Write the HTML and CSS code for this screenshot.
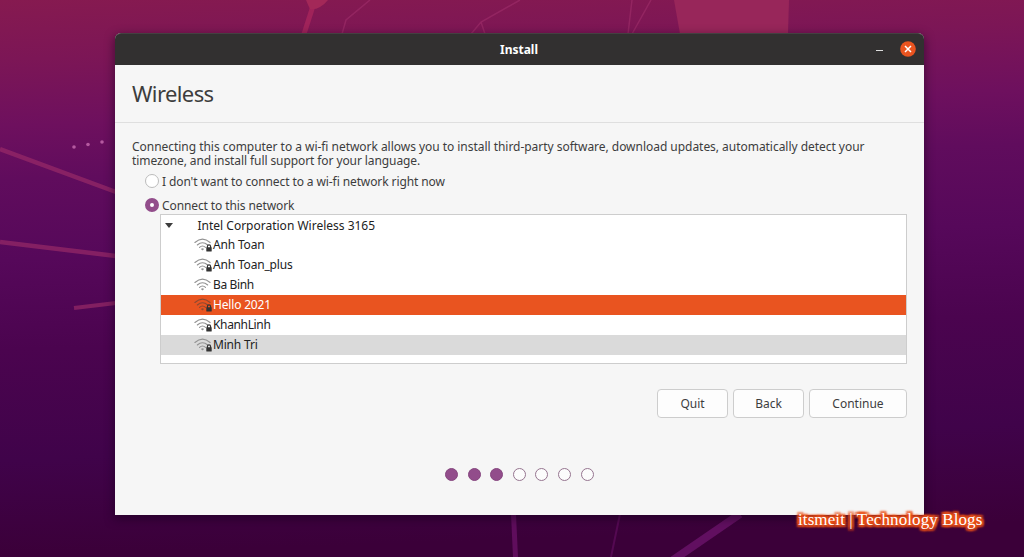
FILE: index.html
```
<!DOCTYPE html>
<html lang="en">
<head>
<meta charset="utf-8">
<title>Install</title>
<link rel="stylesheet" href="styles.css">
</head>
<body>
<svg class="wallpaper" viewBox="0 0 1024 557" aria-hidden="true">
  <g fill="none" stroke="#9c2c68" stroke-opacity=".65">
    <path stroke-width="4.500" d="M0 149 L116 192"/>
    <path stroke-width="4.500" d="M0 242 L116 256"/>
    <path stroke-width="4" d="M74 308 L116 303"/>
    <path stroke-width="5" d="M313 6 L304 34" stroke="#b02a5e"/>
    <path stroke-width="1.500" d="M632 0 L628 34 M651 0 L632 34 M370 0 L346 20 L342 34 M520 0 L481 22 L471 34 M481 22 L485 34"/>
  </g>
  <g fill="none" stroke="#5f0d5c">
    <path stroke-width="8" stroke="#610f60" d="M673 560 L740 514"/>
    <path stroke-width="5" d="M513.500 514 L515.500 557"/>
    <path stroke-width="2" stroke-opacity=".7" d="M620 514 L611 557"/>
  </g>
  <path fill="#a32858" d="M306 0h22q-3 4-8 7t-10 2q-2-4-4-9z"/>
  <path fill="#98265a" d="M674 0h115l-1 34H680z"/>
  <g fill="#b55aa0"><circle cx="74" cy="147" r="1.8"/><circle cx="88" cy="144.500" r="1.8"/><circle cx="102" cy="142" r="1.8"/></g>
</svg>
<svg class="defs" aria-hidden="true">
  <symbol id="wifi" viewBox="0 0 20 16">
    <g fill="none" stroke="currentColor" stroke-width="1.1" stroke-linecap="round">
      <path d="M.9 5.500Q8.500-1.200 16.100 5.500"/>
      <path d="M3.300 8Q8.500 3.400 13.700 8"/>
      <path d="M5.500 10.300Q8.500 7.600 11.500 10.300"/>
    </g>
    <path fill="currentColor" d="M6.900 11.900Q8.500 10.800 10.100 11.900L8.500 13.500z"/>
  </symbol>
  <symbol id="lock" viewBox="0 0 6 8">
    <path fill="none" stroke="#333" stroke-width="1.200" d="M1.400 4V2.500a1.600 1.600 0 0 1 3.200 0V4"/>
    <rect x=".3" y="3.200" width="5.400" height="4.300" rx=".5" fill="#333"/>
  </symbol>
</svg>
<main class="window">
  <header class="titlebar">
    <span class="title">Install</span>
    <span class="minimize"></span>
    <svg class="close" viewBox="0 0 16 16"><circle cx="8" cy="8" r="7.800" fill="#e95420"/><path d="M5 5l6 6M11 5l-6 6" stroke="#fff" stroke-width="1.500"/></svg>
  </header>
  <h1 class="heading"><span>Wireless</span></h1>
  <section class="content">
    <p class="intro"><span class="line1">Connecting this computer to a wi-fi network allows you to install third-party software, download updates, automatically detect your</span><span class="line2">timezone, and install full support for your language.</span></p>
    <div class="option"><i class="radio"></i><span>I don't want to connect to a wi-fi network right now</span></div>
    <div class="option second"><i class="radio on"></i><span>Connect to this network</span></div>
    <div class="list">
      <div class="row device"><i class="arrow"></i><span>Intel Corporation Wireless 3165</span></div>
      <div class="row"><span class="signal"><svg class="wifi"><use href="#wifi"/></svg><svg class="lock"><use href="#lock"/></svg></span><span class="name">Anh Toan</span></div>
      <div class="row"><span class="signal"><svg class="wifi"><use href="#wifi"/></svg><svg class="lock"><use href="#lock"/></svg></span><span class="name">Anh Toan_plus</span></div>
      <div class="row"><span class="signal"><svg class="wifi"><use href="#wifi"/></svg></span><span class="name tight">Ba Binh</span></div>
      <div class="row selected"><span class="signal"><svg class="wifi"><use href="#wifi"/></svg><svg class="lock"><use href="#lock"/></svg></span><span class="name">Hello 2021</span></div>
      <div class="row"><span class="signal"><svg class="wifi"><use href="#wifi"/></svg><svg class="lock"><use href="#lock"/></svg></span><span class="name tight">KhanhLinh</span></div>
      <div class="row hovered"><span class="signal"><svg class="wifi"><use href="#wifi"/></svg><svg class="lock"><use href="#lock"/></svg></span><span class="name">Minh Tri</span></div>
    </div>
    <div class="buttons"><button>Quit</button><button>Back</button><button class="wide">Continue</button></div>
    <div class="steps"><i class="done"></i><i class="done"></i><i class="done"></i><i></i><i></i><i></i><i></i></div>
  </section>
</main>
<div class="watermark">itsmeit | Technology Blogs</div>
</body>
</html>
```
FILE: styles.css
```
* { box-sizing: border-box; }
body {
  margin: 0;
  height: 557px;
  overflow: hidden;
  position: relative;
  padding: 33px 0 0 115px;
  font-family: "Noto Sans", "Open Sans", sans-serif;
  font-size: 12px;
  color: #3d3d3d;
  background: linear-gradient(178deg, #861a50 0, #7c1656 60px, #6e105e 125px, #600c5d 180px, #56085a 260px, #4b044f 350px, #40034a 460px, #3b0039 557px);
}
.wallpaper { position: absolute; left: 0; top: 0; width: 1024px; height: 557px; }
.defs { position: absolute; width: 0; height: 0; }
.window {
  position: relative;
  width: 808.5px;
  height: 482px;
  background: #f6f6f6;
  border-radius: 6px 6px 0 0;
  box-shadow: 0 3px 10px 1px rgba(20, 0, 25, .5);
  white-space: nowrap;
}
.titlebar {
  display: flex;
  align-items: center;
  height: 32px;
  padding: 0 7.5px 2px 0;
  background: #323030;
  border-radius: 6px 6px 0 0;
  border-top: 1px solid #444041;
}
.title { flex: 1; padding: 1px 0 0 47px; text-align: center; color: #fff; font-weight: 700; font-size: 12px; }
.minimize { width: 7px; height: 1px; margin: 4px 17px 0 0; background: #ddd; }
.close { width: 16px; height: 16px; }
.heading {
  display: flex;
  align-items: center;
  height: 58px;
  margin: 0;
  padding: 0 0 1px 17px;
  border-bottom: 1px solid #dfdfdf;
  font-size: 22px;
  font-weight: 400;
  letter-spacing: -.6px;
}
.content { padding: 17px 16.5px 0 17px; }
.intro { margin: 0; line-height: 14px; }
.line1, .line2 { display: block; }
.line1 { letter-spacing: -.035px; }
.line2 { letter-spacing: -.09px; }
.option { display: flex; align-items: center; gap: 3px; height: 20px; margin: 3px 0 0 13px; letter-spacing: -.1px; }
.option.second { margin-top: 4px; }
.radio { width: 14px; height: 14px; border: 1px solid #bcbcbc; border-radius: 50%; background: #fff; }
.radio.on { border: 5px solid #924d8b; }
.list { height: 150px; margin: -1px 0 0 28px; border: 1px solid #cdcdcd; background: #fff; color: #222; }
.row { display: flex; align-items: center; height: 20px; padding-left: 33px; }
.name { padding-bottom: 1px; letter-spacing: -.18px; }
.name.tight { letter-spacing: -.35px; }
.device { padding-left: 4px; gap: 24.5px; }
.arrow { border: 4px solid transparent; border-top: 5px solid #3d3d3d; border-bottom: 0; }
.signal { position: relative; width: 19px; height: 16px; color: #929292; }
.wifi { display: block; width: 20px; height: 16px; }
.lock { position: absolute; left: 12px; top: 7px; width: 6px; height: 8px; }
.selected { background: #e95420; color: #fff; }
.selected .signal { color: #8b4a32; }
.hovered { background: #dadada; }
.buttons { display: flex; justify-content: flex-end; gap: 5px; margin-top: 25px; }
button { width: 71px; height: 29px; padding: 0; border: 1px solid #cdcdcd; border-radius: 4px; background: #fdfdfd; color: #3d3d3d; font: inherit; }
button.wide { width: 98px; }
.steps { display: flex; gap: 9.6px; margin: 50px 0 0 313px; }
.steps i { width: 13px; height: 13px; border: 1px solid #967590; border-radius: 50%; background: #fcfcfc; }
.steps .done { border-color: #86467f; background: #924d8b; }
.watermark {
  position: absolute;
  left: 798px;
  top: 510px;
  font: 17px/20px "Liberation Serif", serif;
  letter-spacing: .1px;
  color: #fff;
  white-space: nowrap;
  text-shadow: -2px 0 2px #e95018, 2px 0 2px #e95018, 0 -2px 2px #e95018, 0 2px 2px #e95018, -2px -2px 2px #e95018, 2px -2px 2px #e95018, -2px 2px 2px #e95018, 2px 2px 2px #e95018, 0 0 2px #e95018, 0 0 3px #e95018;
}
```
